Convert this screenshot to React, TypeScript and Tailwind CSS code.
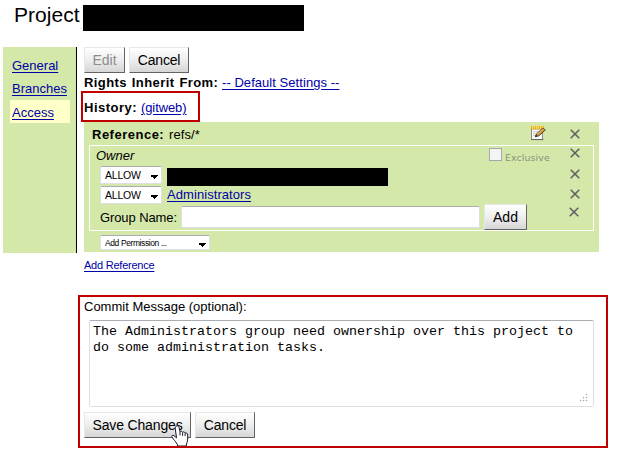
import type { ReactNode } from "react";

const SANS = "font-['Liberation_Sans',Arial,sans-serif]";

function Link({ children, className = "" }: { children: ReactNode; className?: string }) {
  return (
    <a href="#" className={`whitespace-nowrap text-[#0000a8] underline underline-offset-2 ${className}`}>
      {children}
    </a>
  );
}

function Button({ children, className = "", disabled = false }: { children: ReactNode; className?: string; disabled?: boolean }) {
  return (
    <button
      disabled={disabled}
      className={`h-[26px] shrink-0 whitespace-nowrap border border-t-[#e8e8e8] border-l-[#e8e8e8] border-r-[#636363] border-b-[#636363] bg-linear-to-b from-white via-[#eeeeee] to-[#d6d6d6] text-[14px] leading-[24px] ${disabled ? "text-[#8c8c8c]" : "text-black"} ${className}`}
    >
      {children}
    </button>
  );
}

function Select({ children, className = "" }: { children: ReactNode; className?: string }) {
  return (
    <div className={`flex shrink-0 items-center justify-between rounded-[2px] border border-[#dcdfe6] border-t-[#abadb3] bg-white pr-[3px] pl-1 ${className}`}>
      <span className="mt-px whitespace-nowrap">{children}</span>
      <svg width="7" height="4" viewBox="0 0 7 4" className="mt-[4px]" shapeRendering="crispEdges">
        <path d="M0 0H7V1H6V2H5V3H4V4H3V3H2V2H0Z" fill="#000" />
      </svg>
    </div>
  );
}

function Remove({ className = "" }: { className?: string }) {
  return (
    <svg width="10" height="10" viewBox="0 0 10 10" className={`shrink-0 ${className}`}>
      <path d="M.7.7 9.3 9.3M9.3.7.7 9.3" stroke="#5f5c66" strokeWidth="1.5" />
    </svg>
  );
}

function NoteIcon() {
  return (
    <svg width="16" height="16" viewBox="0 0 16 16" className="mb-px shrink-0">
      <path d="M1.5 2.5H12.5V14.5H1.5Z" fill="#fafafa" stroke="#8a8a88" />
      <path d="M1 14.6H13.5" stroke="#656565" />
      <path d="M3 6.5H9M3 8.5H7M3 10.5H6" stroke="#c9cbd0" />
      <path d="M1 1H14V4H1Z" fill="#e3b52a" />
      <path d="M2.5 .5V4M4.5 .5V4M6.5 .5V4M8.5 .5V4M10.5 .5V4M12.5 .5V4" stroke="#f9df69" />
      <path d="M1 4.3H14" stroke="#b98a22" strokeWidth=".6" />
      <path d="M5.4 11.6 6.6 8.8 12.9 3 15.3 5 9 10.8Z" fill="#c98f3e" stroke="#59401f" strokeWidth=".9" />
      <path d="M7.4 9.2 13.2 4" stroke="#f5cb79" />
      <path d="M4.9 12.2 5.9 9.8 7.6 11.2Z" fill="#222" />
    </svg>
  );
}

function HandCursor() {
  return (
    <svg width="18" height="21" viewBox="0 0 18 21" className="absolute top-[128px] left-[91px]">
      <path
        d="M5.2 1.2C6.5.3 7.7 1 8 2.2L9 6.8C9.6 5.8 11.1 6.1 11.5 7.3 12.3 6.5 13.9 6.9 14.1 8.2 15.6 7.6 16.6 8.4 16.7 10L16.7 14C16.6 16.8 15.5 17.8 15.2 21H6.7C6.4 18.3 3.8 16 2.5 14.2L.8 11.8C.4 10.6 1.8 9.8 3 10.6L5.5 12.9 4.2 3.1C4.1 2.3 4.5 1.6 5.2 1.2Z"
        fill="#fff"
        stroke="#16182b"
        strokeWidth="1"
      />
      <path d="M9 6.8V10.3M11.6 7.6V10.8M14.1 8.5V11.1" stroke="#16182b" fill="none" />
    </svg>
  );
}

export default function App() {
  return (
    <div className={`h-[459px] w-[629px] overflow-hidden bg-white text-[13px] text-black ${SANS}`}>
      <header className="flex h-[47px] items-start pt-[5px] pl-[14px]">
        <h1 className="-mt-px w-[69px] text-[21px] leading-[21px] tracking-[0.05px]">Project</h1>
        <div className="h-[26px] w-[221px] bg-black" />
      </header>

      <div className="flex items-start">
        <nav className="ml-[3px] h-[206px] w-[74px] shrink-0 border-r border-black bg-[#d4e9a9] pt-[7px] pr-[6px] pl-[7px] leading-[23px]">
          <div className="h-[23px] pl-[2px]"><Link>General</Link></div>
          <div className="h-[23px] pl-[2px]"><Link>Branches</Link></div>
          <div className="h-[23px] bg-[#ffffc9] pl-[2px] leading-[25px]"><Link>Access</Link></div>
        </nav>

        <main className="w-[552px] shrink-0">
          <div className="flex gap-1 pl-[7px]">
            <Button disabled className="w-[41px]">Edit</Button>
            <Button className="w-[60px] tracking-[-0.2px]">Cancel</Button>
          </div>
          <div className="flex h-[18px] items-start gap-1 pl-[7px] leading-[20px]">
            <b className="w-[134px] whitespace-nowrap tracking-[0.4px] [word-spacing:1px]">Rights Inherit From:</b>
            <Link className="tracking-[0.05px]">-- Default Settings --</Link>
          </div>
          <div className="ml-1 flex h-[31px] w-[119px] items-start gap-1 border-2 border-[#c00000] pl-[1px] leading-[29px]">
            <b className="w-[53px] whitespace-nowrap tracking-[0.5px]">History:</b>
            <Link className="tracking-[-0.1px]">(gitweb)</Link>
          </div>

          <section className="ml-[7px] h-[130px] w-[515px] bg-[#d4e9a9] px-[5px]">
            <div className="flex h-[23px] items-center pl-[3px] leading-[23px]">
              <b className="mt-[2px] w-[77px] whitespace-nowrap tracking-[0.5px]">Reference:</b>
              <span className="mt-[2px] grow tracking-[0.1px]">refs/*</span>
              <NoteIcon />
              <Remove className="mr-[14px] ml-[24px]" />
            </div>
            <div className="flex h-[86px] w-[505px] flex-col border border-white">
              <div className="flex h-[20px] items-start pl-[6px]">
                <i className="grow leading-[20px]">Owner</i>
                <div className="mt-[2px] h-[13px] w-[13px] border border-[#a5a8aa] bg-[#f4f4f4]" />
                <span className="mt-[6px] ml-[3px] w-[45px] font-['DejaVu_Sans',Verdana,sans-serif] text-[9.5px] leading-[12px] tracking-[0.05px] text-[#8c9080]">Exclusive</span>
                <Remove className="mt-[2px] mr-[13px] ml-[20px]" />
              </div>
              <div className="flex h-[20px] items-start pl-[10px]">
                <Select className="h-[18px] w-[62px] text-[10.5px] tracking-[-0.2px]">ALLOW</Select>
                <div className="mt-[2px] ml-[5px] h-[18px] w-[221px] bg-black" />
                <Remove className="mt-[3px] mr-[13px] ml-auto" />
              </div>
              <div className="flex h-[20px] items-start pl-[10px]">
                <Select className="h-[18px] w-[62px] text-[10.5px] tracking-[-0.2px]">ALLOW</Select>
                <Link className="ml-[5px] leading-[18px] tracking-[0.07px]">Administrators</Link>
                <Remove className="mt-[3px] mr-[13px] ml-auto" />
              </div>
              <div className="flex h-[24px] items-start pl-[10px]">
                <label className="w-[81px] whitespace-nowrap leading-[23px] tracking-[-0.1px]">Group Name:</label>
                <div className="h-[22px] w-[299px] rounded-[2px] border border-[#dcdfe6] border-t-[#abadb3] bg-white" />
                <Button className="-mt-[2px] ml-1 w-[43px]">Add</Button>
                <Remove className="mt-[1px] mr-[14px] ml-auto" />
              </div>
            </div>
            <div className="mt-[4px] pl-[11px]">
              <Select className="h-[15px] w-[110px] text-[8.5px] tracking-[-0.4px]">Add Permission ...</Select>
            </div>
          </section>

          <div className="h-[43px] pt-[6px] pl-[7px] leading-[14px]">
            <Link className="text-[11px] tracking-[-0.23px]">Add Reference</Link>
          </div>

          <section className="relative ml-[1px] h-[153px] w-[530px] border-2 border-[#c00000] pl-1">
            <div className="h-[23px] leading-[20px]">Commit Message (optional):</div>
            <div className="ml-[5px] flex h-[87px] w-[505px] flex-col justify-between rounded-[2px] border border-[#dcdfe6] border-t-[#abadb3] pt-[3px] pl-[3px]">
              <p className="font-['Liberation_Mono','Courier_New',monospace] text-[13.33px] leading-[16px]">
                The Administrators group need ownership over this project to
                <br />
                do some administration tasks.
              </p>
              <svg width="8" height="8" viewBox="0 0 8 8" className="mr-[5px] mb-[4px] self-end" fill="#aaa">
                <path d="M6 0h1v1h-1zM3 3h1v1h-1zM6 3h1v1h-1zM0 6h1v1h-1zM3 6h1v1h-1zM6 6h1v1h-1z" stroke="#aaa" strokeWidth=".4" />
              </svg>
            </div>
            <div className="mt-[5px] flex gap-1">
              <Button className="w-[107px] border-t-[#d5e6ff] border-l-[#d5e6ff] border-r-[#315183] border-b-[#315183] tracking-[-0.15px]">Save Changes</Button>
              <Button className="w-[60px] tracking-[-0.2px]">Cancel</Button>
            </div>
            <HandCursor />
          </section>
        </main>
      </div>
    </div>
  );
}
